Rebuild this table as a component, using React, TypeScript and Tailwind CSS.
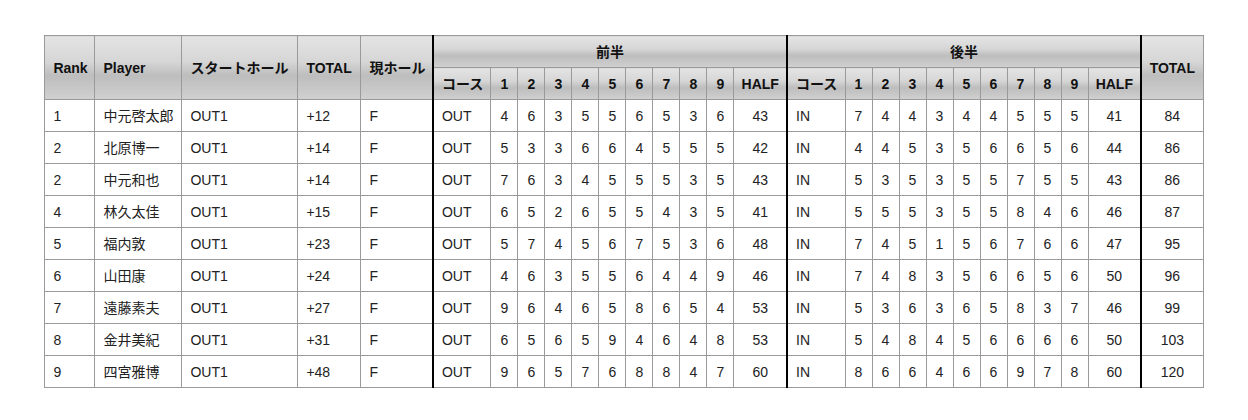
const players = [
  { rank: "1", name: "中元啓太郎", start: "OUT1", total: "+12", cur: "F", out: [4, 6, 3, 5, 5, 6, 5, 3, 6], outHalf: 43, inn: [7, 4, 4, 3, 4, 4, 5, 5, 5], inHalf: 41, sum: 84 },
  { rank: "2", name: "北原博一", start: "OUT1", total: "+14", cur: "F", out: [5, 3, 3, 6, 6, 4, 5, 5, 5], outHalf: 42, inn: [4, 4, 5, 3, 5, 6, 6, 5, 6], inHalf: 44, sum: 86 },
  { rank: "2", name: "中元和也", start: "OUT1", total: "+14", cur: "F", out: [7, 6, 3, 4, 5, 5, 5, 3, 5], outHalf: 43, inn: [5, 3, 5, 3, 5, 5, 7, 5, 5], inHalf: 43, sum: 86 },
  { rank: "4", name: "林久太佳", start: "OUT1", total: "+15", cur: "F", out: [6, 5, 2, 6, 5, 5, 4, 3, 5], outHalf: 41, inn: [5, 5, 5, 3, 5, 5, 8, 4, 6], inHalf: 46, sum: 87 },
  { rank: "5", name: "福内敦", start: "OUT1", total: "+23", cur: "F", out: [5, 7, 4, 5, 6, 7, 5, 3, 6], outHalf: 48, inn: [7, 4, 5, 1, 5, 6, 7, 6, 6], inHalf: 47, sum: 95 },
  { rank: "6", name: "山田康", start: "OUT1", total: "+24", cur: "F", out: [4, 6, 3, 5, 5, 6, 4, 4, 9], outHalf: 46, inn: [7, 4, 8, 3, 5, 6, 6, 5, 6], inHalf: 50, sum: 96 },
  { rank: "7", name: "遠藤素夫", start: "OUT1", total: "+27", cur: "F", out: [9, 6, 4, 6, 5, 8, 6, 5, 4], outHalf: 53, inn: [5, 3, 6, 3, 6, 5, 8, 3, 7], inHalf: 46, sum: 99 },
  { rank: "8", name: "金井美紀", start: "OUT1", total: "+31", cur: "F", out: [6, 5, 6, 5, 9, 4, 6, 4, 8], outHalf: 53, inn: [5, 4, 8, 4, 5, 6, 6, 6, 6], inHalf: 50, sum: 103 },
  { rank: "9", name: "四宮雅博", start: "OUT1", total: "+48", cur: "F", out: [9, 6, 5, 7, 6, 8, 8, 4, 7], outHalf: 60, inn: [8, 6, 6, 4, 6, 6, 9, 7, 8], inHalf: 60, sum: 120 },
];

const holes = [1, 2, 3, 4, 5, 6, 7, 8, 9];

// header cells share one glossy gradient
const th =
  "border border-[#9a9a9a] bg-[linear-gradient(#e4e4e4,#d6d6d6_40%,#bdbdbd_62%,#d0d0d0)] font-bold text-[#111] p-0";
const td = "border border-[#9a9a9a] h-[32px] p-0";

export default function App() {
  return (
    <div
      className="flex justify-center bg-white pt-[35px]"
      style={{ fontFamily: '"Liberation Sans", "Noto Sans CJK JP", Arial, sans-serif' }}
    >
      <table className="w-[1158px] table-fixed border-collapse text-[14px] leading-none text-[#222]">
        <colgroup>
          <col className="w-[50px]" />
          <col className="w-[87px]" />
          <col className="w-[116px]" />
          <col className="w-[63px]" />
          <col className="w-[72px]" />
          <col className="w-[58px]" />
          {holes.map((h) => (
            <col key={"o" + h} className="w-[27px]" />
          ))}
          <col className="w-[53px]" />
          <col className="w-[58px]" />
          {holes.map((h) => (
            <col key={"i" + h} className="w-[27px]" />
          ))}
          <col className="w-[53px]" />
          <col className="w-[62px]" />
        </colgroup>
        <thead>
          <tr className="h-[32px]">
            <th rowSpan={2} className={`${th} pl-2 text-left`}>Rank</th>
            <th rowSpan={2} className={`${th} pl-2 text-left`}>Player</th>
            <th rowSpan={2} className={`${th} pl-2 text-left`}>スタートホール</th>
            <th rowSpan={2} className={`${th} pl-2 text-left`}>TOTAL</th>
            <th rowSpan={2} className={`${th} pl-2 text-left`}>現ホール</th>
            <th colSpan={11} className={`${th} border-l-2 border-l-black text-center`}>前半</th>
            <th colSpan={11} className={`${th} border-l-2 border-l-black text-center`}>後半</th>
            <th rowSpan={2} className={`${th} border-l-2 border-l-black text-center`}>TOTAL</th>
          </tr>
          <tr className="h-[32px]">
            <th className={`${th} border-l-2 border-l-black pl-2 text-left`}>コース</th>
            {holes.map((h) => (
              <th key={"ho" + h} className={`${th} text-center`}>{h}</th>
            ))}
            <th className={`${th} text-center`}>HALF</th>
            <th className={`${th} border-l-2 border-l-black pl-2 text-left`}>コース</th>
            {holes.map((h) => (
              <th key={"hi" + h} className={`${th} text-center`}>{h}</th>
            ))}
            <th className={`${th} text-center`}>HALF</th>
          </tr>
        </thead>
        <tbody>
          {players.map((p, i) => (
            <tr key={i}>
              <td className={`${td} pl-2`}>{p.rank}</td>
              <td className={`${td} pl-2`}>{p.name}</td>
              <td className={`${td} pl-2`}>{p.start}</td>
              <td className={`${td} pl-2`}>{p.total}</td>
              <td className={`${td} pl-2`}>{p.cur}</td>
              <td className={`${td} border-l-2 border-l-black pl-2`}>OUT</td>
              {p.out.map((s, j) => (
                <td key={"o" + j} className={`${td} text-center`}>{s}</td>
              ))}
              <td className={`${td} text-center`}>{p.outHalf}</td>
              <td className={`${td} border-l-2 border-l-black pl-2`}>IN</td>
              {p.inn.map((s, j) => (
                <td key={"i" + j} className={`${td} text-center`}>{s}</td>
              ))}
              <td className={`${td} text-center`}>{p.inHalf}</td>
              <td className={`${td} border-l-2 border-l-black text-center`}>{p.sum}</td>
            </tr>
          ))}
        </tbody>
      </table>
    </div>
  );
}
